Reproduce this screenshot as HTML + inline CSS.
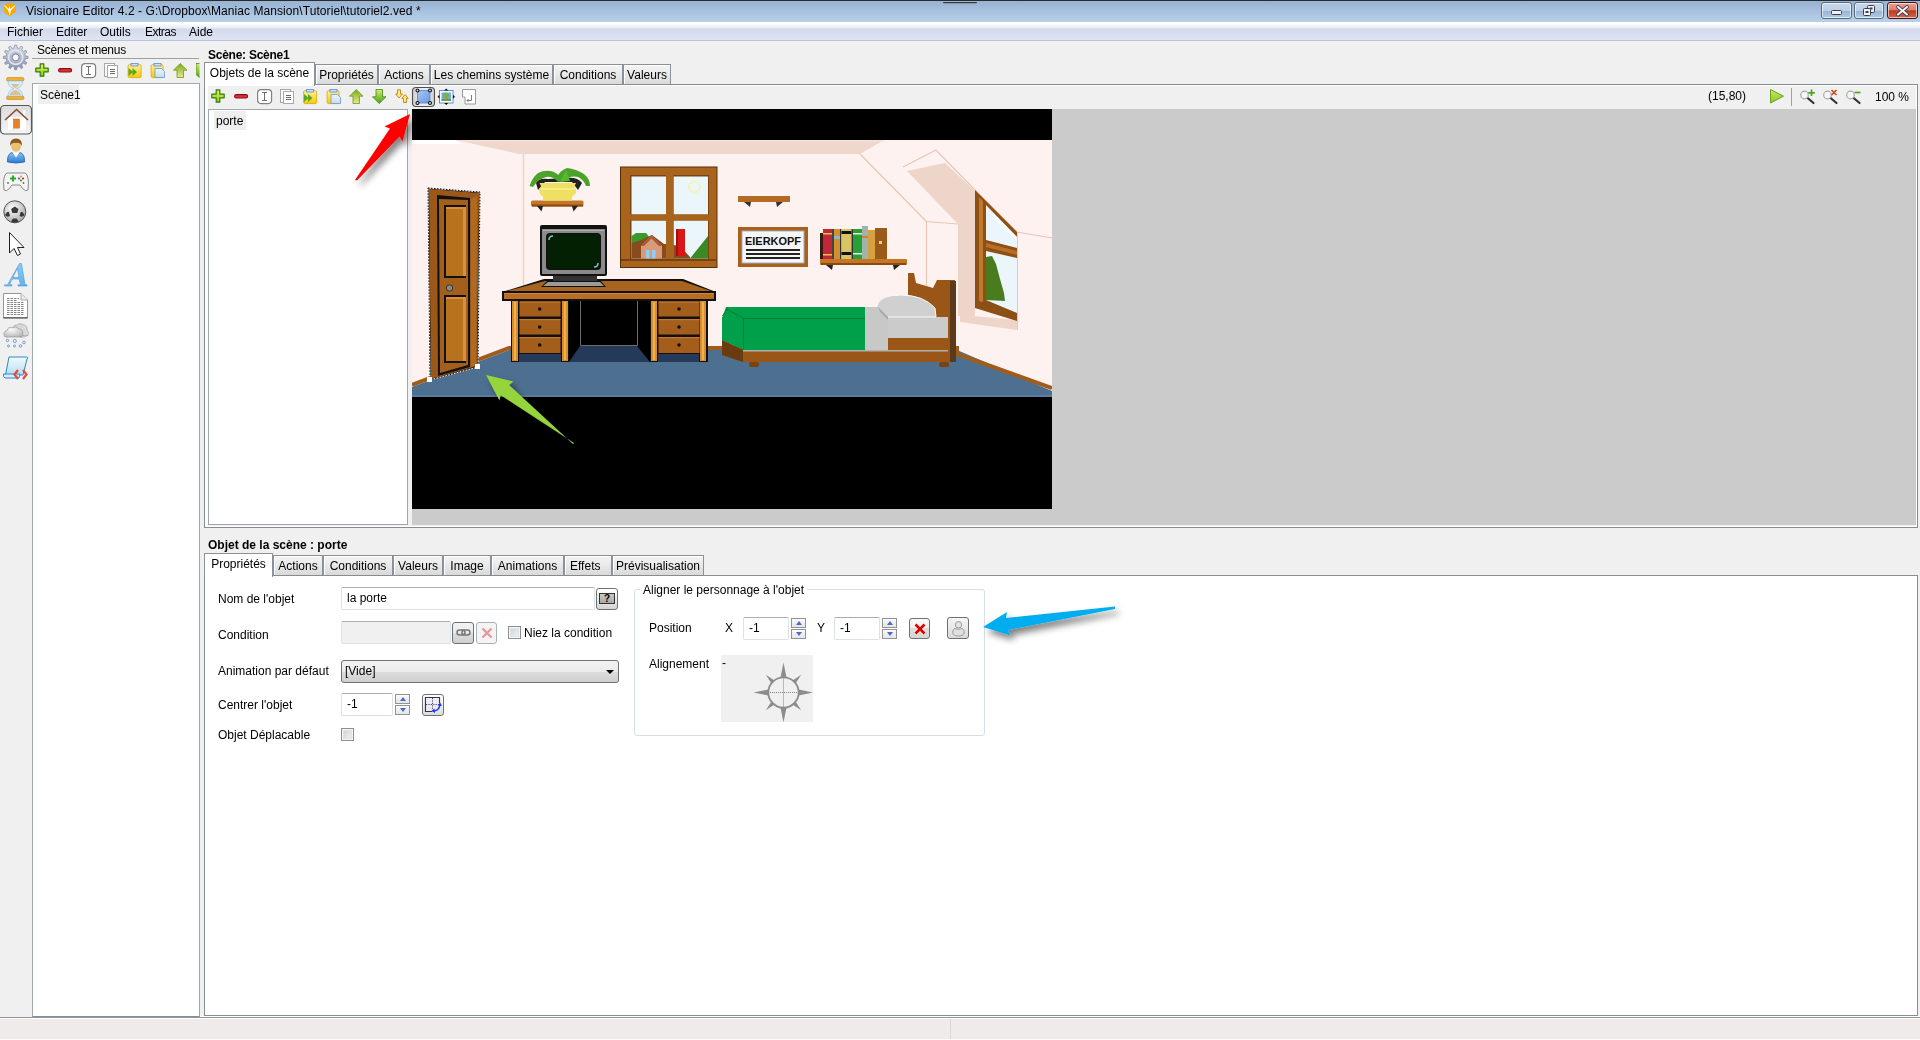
<!DOCTYPE html>
<html><head><meta charset="utf-8">
<style>
*{box-sizing:border-box;margin:0;padding:0}
html,body{width:1920px;height:1040px;overflow:hidden;background:#f0f0f0;font-family:"Liberation Sans",sans-serif;font-size:12px;color:#000}
.a{position:absolute}
.t{position:absolute;white-space:nowrap;line-height:14px;will-change:transform}
#title{left:0;top:0;width:1920px;height:22px;background:linear-gradient(#98b2d3,#b8d0e9);border-top:1px solid #2a2a2a}
#menu{left:0;top:22px;width:1920px;height:19px;background:linear-gradient(#ffffff 0,#fbfcfe 2px,#e9ecf6 6px,#d3d9ec 7px,#dfe4f4 18px);border-bottom:1px solid #b9c1d6}
.wb{position:absolute;top:2px;height:17px;border:1px solid #5a6a82;border-radius:3px;background:linear-gradient(#c6d8ec 0,#bcd0e6 50%,#98b4d2 52%,#b2cbe5 100%);box-shadow:inset 0 0 0 1px rgba(255,255,255,.6)}
.tab{position:absolute;height:20px;border:1px solid #8c9099;border-bottom:none;background:linear-gradient(#f4f4f4,#e9e9e9 50%,#d9d9d9);text-align:center;line-height:21px;box-shadow:inset 1px 1px 0 #fff;will-change:transform}
.tab.sel{background:#fff;height:24px;z-index:2;box-shadow:none}
.pane{position:absolute;border:1px solid #868b96;background:#fff;box-shadow:inset 0 0 0 1px #fff}
.list{position:absolute;border:1px solid #a2a6ae;background:#fff}
.tf{position:absolute;background:#fff;border:1px solid #dde2e8;border-top-color:#abadb3;border-radius:2px}
.btn{position:absolute;border:1px solid #707070;border-radius:3px;background:linear-gradient(#f2f2f2 0,#ebebeb 50%,#dddddd 51%,#cfcfcf 100%)}
.btn.dis{border-color:#a9b1b9;background:#f4f4f4}
.cb{position:absolute;width:13px;height:13px;border:1px solid #8e8f8f;background:linear-gradient(135deg,#c8ccd2,#f8f8f8);box-shadow:inset 0 0 0 1px #f4f4f4,inset 0 0 0 2px #dfe2e6}
.combo{position:absolute;border:1px solid #707070;border-radius:3px;background:linear-gradient(#f2f2f2 0,#ebebeb 50%,#dddddd 51%,#cfcfcf 100%)}
.spin{position:absolute;width:15px;height:22px}
.sb{position:absolute;left:0;width:15px;height:10px;border:1px solid #929292;background:linear-gradient(#fff 0,#f2f2f2 30%,#e6e6e6 100%)}
</style></head><body>
<div id="title" class="a"></div>
<div class="t" style="left:26px;top:4px;letter-spacing:0.07px">Visionaire Editor 4.2 - G:\Dropbox\Maniac Mansion\Tutoriel\tutoriel2.ved *</div>
<div class="wb" style="left:1821px;width:31px"></div>
<div class="wb" style="left:1854px;width:30px"></div>
<div class="wb" style="left:1887px;width:31px;border-color:#4a1018;background:linear-gradient(#e8a090,#d98070 45%,#c0381c 52%,#d06848 100%)"></div>
<svg class="a" style="left:0;top:0;z-index:6" width="1920" height="22">
<path d="M3.5 5 L9.5 2.8 L16 5 L15.5 12 L9.5 16.5 L4 12z" fill="#f8aa00"/>
<path d="M3.5 5 L6 6.2 L8.6 9 L9.5 6 L10.4 9 L13.5 6.2 L16 5 L11 10.5 L9.6 16 L8.4 10.5z" fill="#fff"/>
<rect x="943" y="2" width="34" height="1.2" rx="0.6" fill="#3a3a3a"/>
<rect x="1831.5" y="10.5" width="10" height="4" rx="1" fill="#f0f0f0" stroke="#3a4050" stroke-width="1"/>
<rect x="1867.5" y="5.5" width="7" height="7" rx="1" fill="#f0f0f0" stroke="#3a4050" stroke-width="1"/>
<rect x="1869.5" y="7.5" width="3" height="2" fill="#3a4050"/>
<rect x="1863.5" y="8.5" width="7" height="7" rx="1" fill="#f0f0f0" stroke="#3a4050" stroke-width="1"/>
<rect x="1865.5" y="11" width="3" height="2" fill="#3a4050"/>
<path d="M1898 7 L1907 14.5 M1907 7 L1898 14.5" stroke="#3a4050" stroke-width="3.6" stroke-linecap="round"/>
<path d="M1898 7 L1907 14.5 M1907 7 L1898 14.5" stroke="#f4f4f4" stroke-width="2" stroke-linecap="round"/>
</svg>
<div id="menu" class="a"></div>
<div class="t" style="left:7px;top:25px">Fichier</div>
<div class="t" style="left:56px;top:25px">Editer</div>
<div class="t" style="left:100px;top:25px">Outils</div>
<div class="t" style="left:145px;top:25px;letter-spacing:-0.5px">Extras</div>
<div class="t" style="left:189px;top:25px">Aide</div>

<!-- left panel -->
<svg class="a" style="left:0;top:41px" width="32" height="345" viewBox="0 41 32 345">
<defs>
<linearGradient id="gGear" x1="0" y1="0" x2="0" y2="1"><stop offset="0" stop-color="#dfe2ec"/><stop offset="1" stop-color="#8890ae"/></linearGradient>
<linearGradient id="gHome" x1="0" y1="0" x2="0" y2="1"><stop offset="0" stop-color="#dcdcdc"/><stop offset="1" stop-color="#f6f6f6"/></linearGradient>
<linearGradient id="gBody" x1="0" y1="0" x2="0" y2="1"><stop offset="0" stop-color="#8cc4f0"/><stop offset="1" stop-color="#2a7ad0"/></linearGradient>
<linearGradient id="gA" x1="0" y1="0" x2="1" y2="1"><stop offset="0" stop-color="#a8d8fa"/><stop offset="1" stop-color="#5aaeea"/></linearGradient>
<linearGradient id="gScroll" x1="0" y1="0" x2="0" y2="1"><stop offset="0" stop-color="#f4faff"/><stop offset="1" stop-color="#b6dcf2"/></linearGradient>
<radialGradient id="gCloud" cx="0.4" cy="0.3" r="0.8"><stop offset="0" stop-color="#fafafa"/><stop offset="1" stop-color="#b4b4b4"/></radialGradient>
<radialGradient id="gBall" cx="0.4" cy="0.35" r="0.7"><stop offset="0" stop-color="#fff"/><stop offset="1" stop-color="#a8a8a8"/></radialGradient>
</defs>
<!-- gear -->
<polygon points="14.30,47.90 14.66,45.04 16.74,45.04 17.10,47.90 19.23,48.47 20.98,46.18 22.78,47.22 21.66,49.88 23.22,51.44 25.88,50.32 26.92,52.12 24.63,53.87 25.20,56.00 28.06,56.36 28.06,58.44 25.20,58.80 24.63,60.93 26.92,62.68 25.88,64.48 23.22,63.36 21.66,64.92 22.78,67.58 20.98,68.62 19.23,66.33 17.10,66.90 16.74,69.76 14.66,69.76 14.30,66.90 12.17,66.33 10.42,68.62 8.62,67.58 9.74,64.92 8.18,63.36 5.52,64.48 4.48,62.68 6.77,60.93 6.20,58.80 3.34,58.44 3.34,56.36 6.20,56.00 6.77,53.87 4.48,52.12 5.52,50.32 8.18,51.44 9.74,49.88 8.62,47.22 10.42,46.18 12.17,48.47" fill="url(#gGear)" stroke="#8088a6" stroke-width="0.7" stroke-linejoin="round"/>
<circle cx="15.7" cy="57.4" r="7" fill="none" stroke="#e2e5ee" stroke-width="1.6"/>
<circle cx="15.7" cy="57.4" r="5.2" fill="#b4b9cc"/>
<circle cx="15.7" cy="57.4" r="3.4" fill="#fafafa" stroke="#6a7090" stroke-width="0.8"/>
<!-- hourglass -->
<rect x="6.5" y="77.5" width="17.5" height="3.5" rx="1.5" fill="#f0b030" stroke="#c88010" stroke-width="0.6"/>
<rect x="6.5" y="96" width="17.5" height="3.5" rx="1.5" fill="#f0b030" stroke="#c88010" stroke-width="0.6"/>
<path d="M8 81 Q8 87 14 88.5 Q8 90 8 96 H22.5 Q22.5 90 16.5 88.5 Q22.5 87 22.5 81z" fill="#d8eefc" stroke="#8cc0e8" stroke-width="0.7"/>
<path d="M11 84 h8.5 q-2 3 -4.2 4 q-2.2 -1 -4.3 -4z M9.5 95 q1 -4 5.8 -5 q4.8 1 5.7 5z" fill="#e0c090"/>
<!-- home pressed button -->
<rect x="0.5" y="105.5" width="31" height="28.5" rx="4" fill="url(#gHome)" stroke="#585858" stroke-width="1.2"/>
<rect x="8" y="117" width="18" height="13" fill="#fff"/>
<rect x="23" y="110" width="2.5" height="8" fill="#fff" stroke="#ddd" stroke-width="0.4"/>
<path d="M5 120 L16.6 109.5 L28 120" fill="none" stroke="#8a4a30" stroke-width="1.6"/>
<rect x="13.5" y="119" width="6" height="9.5" fill="#e8802a" stroke="#c86010" stroke-width="0.5"/>
<rect x="12" y="128.5" width="8" height="2" fill="#f0f0f0"/>
<!-- person -->
<path d="M7.5 162 Q7 154 12 152.5 L16 156 L20 152.5 Q25 154 24.5 162 Q16 164 7.5 162z" fill="url(#gBody)" stroke="#1a62b8" stroke-width="0.8"/>
<path d="M12.5 152.5 L16 157.5 L19.5 152.5z" fill="#fff"/>
<ellipse cx="16" cy="146" rx="5" ry="5.8" fill="#e8c070"/>
<path d="M10.2 146 Q9.5 138.5 16 138.5 Q22.5 138.5 21.8 146 Q20 142 16 143 Q12 142 10.2 146z" fill="#8a5a20"/>
<!-- gamepad -->
<path d="M7 173 H25 Q28 174 28.5 183 L28 190 Q26 192 23 189 L20 185 H12 L9 189 Q6 192 4 190 L3.5 183 Q4 174 7 173z" fill="#f4f4f4" stroke="#808080" stroke-width="0.9"/>
<path d="M10 177.5 h2 v-2 h2 v2 h2 v2 h-2 v2 h-2 v-2 h-2z" fill="#2ca82c"/>
<circle cx="19" cy="178.5" r="1.1" fill="#2a6ad8"/><circle cx="21" cy="176.5" r="1.1" fill="#f0a020"/><circle cx="23" cy="178.5" r="1.1" fill="#e02020"/><circle cx="21" cy="180.5" r="1.1" fill="#20a020"/>
<circle cx="8" cy="183" r="0.9" fill="#666"/><circle cx="23.5" cy="183" r="0.9" fill="#666"/>
<!-- ball -->
<circle cx="14.8" cy="211.8" r="11" fill="url(#gBall)" stroke="#303030" stroke-width="0.8"/>
<polygon points="14.8,206.5 18.5,209 17.3,213 12.3,213 11.1,209" fill="#3a3a3a"/>
<path d="M5 215 q2 -4 4 -3 l1 4 q-3 2 -5 -1z M24.6 215 q-2 -4 -4 -3 l-1 4 q3 2 5 -1z M11 221.5 l2 -3 h3.6 l2 3 q-4 1.8 -7.6 0z" fill="#3a3a3a"/>
<!-- cursor -->
<path d="M9.5 232.5 V253 L14 248.5 L17.5 255.5 L20.5 254 L17.5 247.5 H24z" fill="#fff" stroke="#222" stroke-width="1" stroke-linejoin="round"/>
<!-- A -->
<path d="M4.5 286 H12 V284.8 H9.5 L12 279 H19 L20.5 284.8 H18 V286 H27 V284.8 H25 L21.5 263.5 H19.5 L7.5 284.8 H4.5z M12.8 277.5 L17.5 268 L18.8 277.5z" fill="url(#gA)" stroke="#4a98d8" stroke-width="0.6" fill-rule="evenodd"/>
<!-- document -->
<path d="M3.5 293.5 H21 L27.5 300 V318 H3.5z" fill="#fff" stroke="#8a8a8a" stroke-width="0.9"/>
<path d="M21 293.5 V300 H27.5" fill="#ececec" stroke="#9a9a9a" stroke-width="0.8"/>
<rect x="3.5" y="317" width="24" height="1.5" fill="#6a6a6a"/>
<g stroke="#6a6a6a" stroke-width="0.8" stroke-dasharray="2.5,1">
<path d="M7 298.5 H19 M7 300.5 H17 M7 302.5 H24 M7 304.5 H24 M7 306.5 H24 M7 308.5 H24 M7 310.5 H24 M7 312.5 H24 M7 314.5 H24"/>
</g>
<!-- cloud -->
<path d="M13 330 Q12 325 17 325 Q19 322.5 23 324.5 Q27.5 325 27 330 Q29.5 332 28 335.5 H14z" fill="#d8d8d8" stroke="#a8a8a8" stroke-width="0.7"/>
<path d="M4.5 336.5 Q2.5 331.5 7 330.5 Q8 326.5 12.5 327.5 Q16 325.5 19 329 Q23 329 22.5 333 Q24 335.5 21.5 337 H6z" fill="url(#gCloud)" stroke="#9a9a9a" stroke-width="0.7"/>
<path d="M20 337 Q25 337.5 27.5 335.5" fill="none" stroke="#9a9a9a" stroke-width="0.7"/>
<g fill="none" stroke="#5a8ad8" stroke-width="0.8">
<circle cx="7.5" cy="340.5" r="1.2"/><circle cx="14.8" cy="341" r="1.6"/><circle cx="24" cy="342.5" r="1.3"/>
<circle cx="8.5" cy="346" r="1"/><circle cx="14.5" cy="346" r="1"/><circle cx="20.5" cy="346" r="1.3"/>
</g>
<!-- scroll -->
<path d="M9 357 H27 Q28.5 357.5 27 359 L23 375 H5.5z" fill="url(#gScroll)" stroke="#2a88c8" stroke-width="1"/>
<path d="M3.5 374 H20 L19 378 H5 Q3 377 3.5 374z" fill="#d8eefa" stroke="#2a88c8" stroke-width="1"/>
<path d="M18 370 L14.5 374.5 L18 379 M23 370 L26.5 374.5 L23 379" fill="none" stroke="#e84a3a" stroke-width="2.2"/>
</svg>

<div class="t" style="left:37px;top:43px;letter-spacing:-0.25px">Scènes et menus</div>
<div class="a" style="left:32px;top:58px;width:167px;height:1px;background:#a0a0a0"></div>
<div class="list" style="left:32px;top:83px;width:168px;height:934px;border-bottom-color:#8a8e96"></div>
<div class="a" style="left:38px;top:85px;width:41px;height:19px;background:#efefef"></div>
<div class="t" style="left:40px;top:88px">Scène1</div>

<!-- top right pane -->
<div class="t" style="left:208px;top:48px;font-weight:bold;letter-spacing:-0.25px">Scène: Scène1</div>
<div class="pane" style="left:204px;top:84px;width:1714px;height:444px;background:#f0f0f0"></div>
<div class="tab sel" style="left:204px;top:62px;width:111px">Objets de la scène</div>
<div class="tab" style="left:315px;top:64px;width:63px">Propriétés</div>
<div class="tab" style="left:378px;top:64px;width:52px">Actions</div>
<div class="tab" style="left:430px;top:64px;width:123px">Les chemins système</div>
<div class="tab" style="left:553px;top:64px;width:70px">Conditions</div>
<div class="tab" style="left:623px;top:64px;width:48px">Valeurs</div>
<div class="a" style="left:205px;top:86px;width:3px;height:441px;background:#fff"></div>
<div class="list" style="left:208px;top:109px;width:200px;height:416px"></div>
<div class="a" style="left:214px;top:111px;width:32px;height:19px;background:#efefef"></div>
<div class="t" style="left:216px;top:114px">porte</div>
<div class="a" style="left:412px;top:109px;width:1504px;height:416px;background:#cbcbcb"></div>
<svg class="a" style="left:412px;top:109px" width="640" height="400" viewBox="412 109 640 400">
<rect x="412" y="109" width="640" height="400" fill="#000"/>
<!-- walls -->
<rect x="412" y="140" width="640" height="257" fill="#fdf2ef"/>
<polygon points="456,140 884,140 860,154 519,154" fill="#efd7cc"/><rect x="456" y="140" width="428" height="1.5" fill="#f6e2d8"/>
<polygon points="412,140 456,140 462,144 412,144" fill="#ffffff"/>
<line x1="523.5" y1="154" x2="523.5" y2="345" stroke="#eed2c6" stroke-width="1.5"/>
<line x1="860" y1="154" x2="926" y2="221" stroke="#e8c6b6" stroke-width="1.2"/>
<line x1="926.5" y1="221" x2="926.5" y2="345" stroke="#e8c6b6" stroke-width="1.2"/>
<line x1="926" y1="221.5" x2="958" y2="224" stroke="#e8c6b6" stroke-width="1.2"/>
<!-- dormer -->

<polyline points="903,167 936,150 975,190" fill="none" stroke="#e8c6b6" stroke-width="1.2"/>
<polygon points="907,171 945,163 975,191 975,316 958,316 958,224" fill="#edd5ca"/>
<polyline points="975,190 1017,232 1052,238" fill="none" stroke="#e8c6b6" stroke-width="1.2"/>
<line x1="1017.5" y1="232" x2="1017.5" y2="330" stroke="#e8c6b6" stroke-width="1"/>
<polygon points="960,315 1017,320 1017,330 960,322" fill="#eed5ca"/>
<!-- dormer window -->
<polygon points="975,190 1017,232 1017,321 975,308" fill="#8c4f14"/>
<polygon points="979,197 983,201 983,302 979,301" fill="#c07830"/>
<polygon points="986,205 1017,237 1017,248 986,240" fill="#eaf6fb"/>
<polygon points="994,214 1017,237 1017,241 992,216" fill="#ffffff" opacity="0.7"/>
<polygon points="986,251 1017,258 1017,313 986,300" fill="#eaf6fb"/>
<polygon points="986,257 992,256 996,264 1000,279 1004,293 1005,301 986,300" fill="#4a7c1e"/>
<polygon points="986,243 1017,251 1017,255 986,247" fill="#b86e26"/>
<!-- floor -->
<polygon points="412,387 509,350 957,350 1052,391 1052,397 412,397" fill="#4e7090"/>
<polyline points="412,385 509,348 957,348 957,354 1052,388" fill="none" stroke="#a05c1c" stroke-width="4"/>
<rect x="412" y="395" width="640" height="2" fill="#5a7ea0"/>
<!-- door -->
<polygon points="428,188 480,192 478,367 430,380" fill="#111"/>
<polygon points="429,189 479,193 477,366 431,379" fill="#9c5818"/>
<polygon points="437,195 470,198 470,367 438,376" fill="#111"/>
<polygon points="439,199 468,200 468,365 440,373" fill="#a4601a"/>
<polygon points="471,199 477,196 476,365 471,367" fill="#b06a20"/>
<rect x="444" y="205" width="22" height="73" fill="#111"/>
<rect x="446" y="207" width="20" height="69" fill="#b8721e"/>
<rect x="463" y="207" width="3" height="69" fill="#d89040"/>
<rect x="446" y="207" width="20" height="2" fill="#d89040"/>
<rect x="444" y="295" width="22" height="68" fill="#111"/>
<rect x="446" y="297" width="20" height="64" fill="#b8721e"/>
<rect x="463" y="297" width="3" height="64" fill="#d89040"/>
<rect x="446" y="297" width="20" height="2" fill="#d89040"/>
<circle cx="449.5" cy="288" r="3.2" fill="#8a8a8a" stroke="#333" stroke-width="1"/>
<polygon points="428,188 480,192 478,367 430,380" fill="none" stroke="#fff" stroke-width="1"/>
<polygon points="428,188 480,192 478,367 430,380" fill="none" stroke="#000" stroke-width="1" stroke-dasharray="1.5,1.5"/>
<rect x="427" y="377" width="5" height="5" fill="#fff"/>
<rect x="475" y="364" width="5" height="5" fill="#fff"/>
<!-- plant & shelf -->
<rect x="531" y="200.5" width="52.5" height="6" rx="1.5" fill="#c47624"/>
<rect x="532" y="204.5" width="51" height="2" fill="#8a4a10"/>
<path d="M537 206 l4.5 5.5 l1.5 -5.5z M578 206 l-4.5 5.5 l-1.5 -5.5z" fill="#222"/>
<path d="M536 183 Q538 178 548 179 L566 178 Q578 177 582 183 L578 190 L572 182 L545 182 L538 190z" fill="#222"/>
<path d="M539.5 183 H576 L574 187 Q577 189 576 193 L572 197 V200.5 H543 V197 Q538 193 539.5 189 L541.5 187z" fill="#efe064"/>
<path d="M541 189 H575" stroke="#f8f090" stroke-width="1.5"/>
<path d="M529.5 186 Q532 178 538 173 Q546 169 554 172 Q560 175 562 181 L558 182 Q553 176 546 177 Q538 179 533 187z" fill="#4aa42a"/>
<path d="M556 179 Q560 170 567 168 Q576 169 584 174 Q590 179 590 186 L586 186 Q584 180 578 177 Q570 175 564 181z" fill="#4aa42a"/>
<path d="M560 182 L566 170 L570 181z" fill="#5ab830"/>
<!-- window -->
<rect x="620" y="166.5" width="97.5" height="101.5" fill="#5a2e08"/>
<rect x="621" y="167.5" width="95.5" height="99.5" fill="#a8641c"/>
<rect x="630" y="175" width="79" height="85" fill="#7a4210"/>
<rect x="631.5" y="176.5" width="34.5" height="38" fill="#ebf6fa"/>
<rect x="673.5" y="176.5" width="34.5" height="38" fill="#ebf6fa"/>
<rect x="631.5" y="220.5" width="34.5" height="38" fill="#ebf6fa"/>
<rect x="673.5" y="220.5" width="34.5" height="38" fill="#ebf6fa"/>
<rect x="666" y="175" width="7.5" height="85" fill="#a8641c"/>
<rect x="630" y="214.5" width="79" height="6" fill="#a8641c"/>
<rect x="621" y="259" width="95.5" height="2" fill="#7a4210"/>
<circle cx="694.5" cy="187" r="5.5" fill="none" stroke="#f6f0a0" stroke-width="2" stroke-dasharray="1.5,1"/>
<polygon points="631.5,236 636,233 646,233 650,238 646,243 631.5,243" fill="#3a9a2a"/>
<polygon points="631.5,243 641,240 652,235 664,244 666,244 666,258.5 631.5,258.5" fill="#8a4a20"/>
<polygon points="641,246 651.5,235 662,246 662,258.5 641,258.5" fill="#d89a78"/>
<polygon points="641,246 651.5,235 662,246 659,246 651.5,238.5 644,246" fill="#a85a38"/>
<rect x="646" y="250" width="3.5" height="8.5" fill="#8cd0f8"/>
<rect x="652" y="250" width="3.5" height="8.5" fill="#8cd0f8"/>
<polygon points="673.5,245 680,246 690,257 690,258.5 673.5,258.5" fill="#8a4a20"/>
<rect x="676" y="229" width="9" height="27" fill="#d81818"/>
<rect x="676" y="229" width="2" height="27" fill="#a01010"/>
<polygon points="690,258.5 708,236 708,258.5" fill="#3a8a24"/>
<!-- empty shelf -->
<rect x="738" y="196" width="52" height="6" fill="#b36a22"/>
<path d="M744 202 l6 5 l1 -5z M783 202 l-6 5 l-1 -5z" fill="#333"/>
<!-- sign -->
<rect x="738" y="227" width="70" height="40" fill="#a8601c"/>
<rect x="742" y="231" width="62" height="32" fill="#f6f6f6" stroke="#9fb0c0" stroke-width="1"/>
<text x="773" y="245" font-family="Liberation Sans" font-weight="bold" font-size="11" text-anchor="middle" fill="#111" textLength="56" lengthAdjust="spacingAndGlyphs">EIERKOPF</text>
<rect x="746" y="249" width="54" height="2" fill="#222"/>
<rect x="746" y="253" width="54" height="2" fill="#222"/>
<rect x="746" y="257" width="54" height="2" fill="#222"/>
<!-- books -->
<rect x="820" y="259" width="87" height="6" rx="1" fill="#c47624"/>
<rect x="821" y="263" width="85" height="2" fill="#8a4a10"/>
<path d="M826 265 l6 5 l1 -5z M900 265 l-6 5 l-1 -5z" fill="#222"/>
<rect x="820" y="233" width="3" height="26" fill="#3a1a10"/>
<rect x="823" y="229" width="9" height="30" fill="#c02838"/>
<rect x="823" y="233" width="9" height="1.5" fill="#f0c040"/><rect x="823" y="254" width="9" height="1.5" fill="#f0c040"/>
<rect x="832" y="229" width="2" height="30" fill="#444"/>
<rect x="834" y="229" width="6" height="30" fill="#d09030"/>
<rect x="834" y="236" width="6" height="3" fill="#88b8d0"/>
<rect x="840" y="229" width="1.5" height="30" fill="#333"/>
<rect x="841.5" y="229" width="10" height="30" fill="#d8c464"/>
<rect x="841.5" y="231" width="10" height="3" fill="#111"/><rect x="841.5" y="252" width="10" height="3" fill="#111"/>
<rect x="851.5" y="229" width="1.5" height="30" fill="#333"/>
<rect x="853" y="229" width="9" height="30" fill="#28a038"/>
<rect x="853" y="233" width="9" height="1.5" fill="#e0f0e0"/><rect x="853" y="253" width="9" height="1.5" fill="#e0f0e0"/>
<rect x="862" y="226" width="6" height="33" fill="#a0b4ac"/>
<rect x="862" y="236" width="6" height="2" fill="#d08040"/>
<rect x="868" y="230" width="7" height="29" fill="#d8a040"/>
<rect x="875" y="228" width="12" height="31" fill="#9a5a1c"/>
<rect x="879" y="241" width="3" height="3" fill="#f0d080"/>
<!-- desk -->
<polygon points="502,292 544,279 683,279 716,292" fill="#111"/>
<polygon points="507,291 545,281 682,281 711,291" fill="#a8641e"/>
<rect x="502" y="291" width="214" height="10" fill="#111"/>
<rect x="504" y="293" width="210" height="6" fill="#b86e22"/>
<rect x="504" y="293" width="210" height="1" fill="#d08838"/>
<rect x="511" y="300" width="197" height="62" fill="#111"/>
<rect x="569" y="301" width="81" height="61" fill="#000"/>
<g fill="#d88e2c"><rect x="512" y="301" width="6" height="60"/><rect x="562" y="301" width="6" height="60"/><rect x="651" y="301" width="6" height="60"/><rect x="700" y="301" width="6" height="60"/></g>
<g fill="#f0b050"><rect x="514" y="302" width="2" height="58"/><rect x="564" y="302" width="2" height="58"/><rect x="653" y="302" width="2" height="58"/><rect x="702" y="302" width="2" height="58"/></g>
<g fill="#a45e1c"><rect x="519.5" y="301.5" width="41" height="15"/><rect x="519.5" y="319" width="41" height="15.5"/><rect x="519.5" y="337" width="41" height="16"/><rect x="658.5" y="301.5" width="41" height="15"/><rect x="658.5" y="319" width="41" height="15.5"/><rect x="658.5" y="337" width="41" height="16"/></g>
<g fill="#c47a2c"><rect x="519.5" y="301.5" width="41" height="1.2"/><rect x="519.5" y="319" width="41" height="1.2"/><rect x="519.5" y="337" width="41" height="1.2"/><rect x="658.5" y="301.5" width="41" height="1.2"/><rect x="658.5" y="319" width="41" height="1.2"/><rect x="658.5" y="337" width="41" height="1.2"/></g>
<g fill="#111"><circle cx="539.7" cy="309" r="1.8"/><circle cx="539.7" cy="327" r="1.8"/><circle cx="539.7" cy="345" r="1.8"/><circle cx="679" cy="309" r="1.8"/><circle cx="679" cy="327" r="1.8"/><circle cx="679" cy="345" r="1.8"/></g>
<rect x="519" y="354" width="42" height="8" fill="#243a58"/>
<rect x="658" y="354" width="41" height="8" fill="#243a58"/>
<polygon points="580,346 637,346 650,362 569,362" fill="#243a58"/>
<polyline points="580.5,301 580.5,345.5 637.5,345.5 637.5,301" fill="none" stroke="#6a6a6a" stroke-width="1"/>
<!-- TV -->
<rect x="540" y="225" width="67" height="51" rx="2" fill="#111"/>
<rect x="542" y="229" width="63" height="45" fill="#8a8a8a"/>
<rect x="543" y="230" width="61" height="1" fill="#b0b0b0"/>
<rect x="546" y="233" width="55" height="37" rx="4" fill="#111"/>
<rect x="547" y="234" width="53" height="35" rx="4" fill="#032003"/>
<path d="M549 240 q0 -4 4 -4" fill="none" stroke="#8ab8d8" stroke-width="1.5"/>
<path d="M598 263 q0 4 -4 4" fill="none" stroke="#8ab8d8" stroke-width="1.5"/>
<rect x="553" y="276" width="44" height="6" fill="#333"/>
<polygon points="547,281 601,281 606,287 541,287" fill="#111"/>
<polygon points="548,282 600,282 604,286 543,286" fill="#9a9a9a"/>
<!-- bed -->
<polygon points="908,273 914,273 916,283 933,288 937,280 955,280 956,362 908,362" fill="#9a5616"/>
<rect x="950" y="281" width="6" height="81" fill="#5a3a1a"/>
<polygon points="888,317 948,317 948,338 888,338" fill="#cbcbcb"/>
<path d="M877 306 q2 -11 24 -11 q22 0 34 13 l1 9 h-59z" fill="#d0d0d0" stroke="#fafafa" stroke-width="1"/>
<polygon points="865,307 878,307 888,317 888,350 865,350" fill="#c8c8c8"/>
<polygon points="878,307 888,317 888,320 880,312" fill="#aaa"/>
<rect x="888" y="338" width="60" height="12" fill="#9a5616"/>
<polygon points="726,307 865,307 865,350 743,350 722,340 722,318" fill="#00a04a"/>
<polyline points="722.5,316 728,308" fill="none" stroke="#0a7a3a" stroke-width="1"/>
<line x1="743.5" y1="318" x2="743.5" y2="350" stroke="#0a7a3a" stroke-width="1"/>
<line x1="726" y1="309" x2="743" y2="318" stroke="#0a7a3a" stroke-width="1"/>
<line x1="743" y1="318.5" x2="865" y2="318.5" stroke="#0a7a3a" stroke-width="1"/>
<polygon points="722,340 743,350 948,350 948,362 743,362 722,355" fill="#9a5616"/>
<polygon points="722,340 743,350 743,362 722,355" fill="#6a3a10"/>
<rect x="743" y="350" width="205" height="1.5" fill="#b0b0b0"/>
<rect x="749" y="362" width="10" height="5" rx="2" fill="#7a4210"/>
<rect x="939" y="362" width="10" height="5" rx="2" fill="#7a4210"/>
</svg>

<div class="t" style="left:1708px;top:89px">(15,80)</div>
<div class="t" style="left:1875px;top:90px">100 %</div>

<svg class="a" style="left:0;top:0;z-index:5" width="1920" height="120">
<defs>
<linearGradient id="gPlus" x1="0" y1="0" x2="0" y2="1"><stop offset="0" stop-color="#e8f24a"/><stop offset="1" stop-color="#8cc828"/></linearGradient>
<linearGradient id="gFold" x1="0" y1="0" x2="0" y2="1"><stop offset="0" stop-color="#fff2a0"/><stop offset="1" stop-color="#f8c800"/></linearGradient>
<linearGradient id="gUp" x1="0" y1="0" x2="0" y2="1"><stop offset="0" stop-color="#7aa818"/><stop offset="1" stop-color="#e8ea90"/></linearGradient>
<linearGradient id="gDown" x1="0" y1="0" x2="0" y2="1"><stop offset="0" stop-color="#d8ec78"/><stop offset="1" stop-color="#48a010"/></linearGradient>
<linearGradient id="gPaper" x1="0" y1="0" x2="0" y2="1"><stop offset="0" stop-color="#eaf4fc"/><stop offset="1" stop-color="#c8dcf0"/></linearGradient>
<linearGradient id="gPressed" x1="0" y1="0" x2="1" y2="0"><stop offset="0" stop-color="#c8c8c8"/><stop offset="0.25" stop-color="#ececec"/><stop offset="0.75" stop-color="#ececec"/><stop offset="1" stop-color="#c8c8c8"/></linearGradient>
<linearGradient id="gBlueSq" x1="0" y1="0" x2="1" y2="1"><stop offset="0" stop-color="#a8c8f0"/><stop offset="1" stop-color="#6a98e0"/></linearGradient>
<linearGradient id="gPlay" x1="0" y1="0" x2="0" y2="1"><stop offset="0" stop-color="#c8e860"/><stop offset="1" stop-color="#8cc828"/></linearGradient>
<g id="iPlus"><path d="M5.2 0.8 H8.8 V5.2 H13.2 V8.8 H8.8 V13.2 H5.2 V8.8 H0.8 V5.2 H5.2z" fill="url(#gPlus)" stroke="#2e7a0e" stroke-width="1.2" stroke-linejoin="round"/></g>
<g id="iMinus"><rect x="0.6" y="0.6" width="13" height="3.4" rx="1.7" fill="#e0303a" stroke="#8a1010" stroke-width="1.1"/></g>
<g id="iIbeam"><rect x="0.6" y="0.6" width="14" height="14" rx="3.5" fill="#fff" stroke="#808080" stroke-width="1.2"/><path d="M5 3.5 H10 M7.5 3.5 V11.5 M5 11.5 H10" stroke="#707070" stroke-width="1"/></g>
<g id="iCopy"><rect x="0.5" y="0.5" width="10" height="13" fill="#fff" stroke="#a8a8a8"/><rect x="3.5" y="2.5" width="10" height="12" fill="#fff" stroke="#a8a8a8"/><rect x="6" y="6" width="5" height="1" fill="#6a6a6a"/><rect x="6" y="8" width="5" height="1" fill="#6a6a6a"/><rect x="6" y="10" width="5" height="1" fill="#6a6a6a"/></g>
<g id="iPasteArr"><rect x="0.6" y="1.6" width="13" height="13" rx="1.5" fill="url(#gFold)" stroke="#d8a800" stroke-width="0.8"/><rect x="3.5" y="0.5" width="7" height="2.5" fill="#cfe0f6" stroke="#5a90d8" stroke-width="0.8"/><path d="M1 5 L5.5 9 L1 13z M5 5 L9.5 9 L5 13z" fill="#5aa820"/></g>
<g id="iPaste"><rect x="0.6" y="1.6" width="12" height="13" rx="1.5" fill="url(#gFold)" stroke="#d8a800" stroke-width="0.8"/><rect x="3.5" y="0.5" width="7" height="2.5" fill="#cfe0f6" stroke="#5a90d8" stroke-width="0.8"/><path d="M4.5 5.5 H11 L14 8.5 V14.5 H4.5z" fill="url(#gPaper)" stroke="#6a98d8" stroke-width="0.8"/></g>
<g id="iUp"><path d="M7.2 0.5 L14 7.2 H10.5 V14.5 H4 V7.2 H0.5z" fill="url(#gUp)" stroke="#6a9a10" stroke-width="0.8" stroke-linejoin="round"/></g>
<g id="iDown"><path d="M7.2 14.5 L14 7.8 H10.5 V0.5 H4 V7.8 H0.5z" fill="url(#gDown)" stroke="#3a8a10" stroke-width="0.8" stroke-linejoin="round"/></g>
<g id="iSwap"><path d="M2.5 0.8 H5.5 V5 H7.5 L4 9 L0.5 5 H2.5z M8.5 13.5 H11.5 V9.5 H13.2 L10 5.5 L6.8 9.5 H8.5z" fill="#ffe890" stroke="#c89010" stroke-width="1" stroke-linejoin="round"/></g>
</defs>
<!-- left panel toolbar -->
<use href="#iPlus" x="35" y="63"/>
<use href="#iMinus" x="58" y="68"/>
<use href="#iIbeam" x="81" y="63"/>
<use href="#iCopy" x="104" y="63"/>
<use href="#iPasteArr" x="127.5" y="63"/>
<use href="#iPaste" x="150.5" y="63"/>
<use href="#iUp" x="173" y="63"/>
<svg x="196" y="60" width="3.5" height="20"><use href="#iDown" x="-4" y="3"/></svg>
<!-- scene toolbar -->
<use href="#iPlus" x="211" y="89"/>
<use href="#iMinus" x="234" y="94"/>
<use href="#iIbeam" x="257" y="89"/>
<use href="#iCopy" x="280" y="89"/>
<use href="#iPasteArr" x="303" y="89"/>
<use href="#iPaste" x="326.5" y="89"/>
<use href="#iUp" x="349" y="89"/>
<use href="#iDown" x="372" y="89"/>
<use href="#iSwap" x="395" y="89"/>
<rect x="412.5" y="87.5" width="22" height="19" rx="3.5" fill="url(#gPressed)" stroke="#505050" stroke-width="1.1"/>
<rect x="417.5" y="90.5" width="12.5" height="12.5" fill="url(#gBlueSq)" stroke="#4a80e0" stroke-width="0.8"/>
<g fill="#ddd" stroke="#111" stroke-width="1.1"><circle cx="417.5" cy="90.5" r="1.5"/><circle cx="430" cy="90.5" r="1.5"/><circle cx="417.5" cy="103" r="1.5"/><circle cx="430" cy="103" r="1.5"/></g>
<rect x="439.5" y="90.5" width="13.5" height="12.5" fill="#fff" stroke="#5a90e0" stroke-width="1"/>
<rect x="441.5" y="92.5" width="9.5" height="8.5" fill="#7aa8d8"/>
<rect x="441.5" y="99" width="9.5" height="2" fill="#5aa838"/>
<circle cx="446.2" cy="95.5" r="2.8" fill="#6ab850"/>
<rect x="445.5" y="98" width="1.5" height="3" fill="#c88030"/>
<path d="M446.2 88.5 l-2 2 h4z M446.2 105 l-2 -2 h4z M437.5 96.8 l2 -2 v4z M455 96.8 l-2 -2 v4z" fill="#111"/>
<path d="M462.5 89.5 H475.5 V104 H465 V97 H462.5z" fill="#fff" stroke="#909090" stroke-width="0.9"/>
<path d="M471.5 95 V100.5 H467 M468.5 99 L467 100.5 L468.5 102" fill="none" stroke="#707070" stroke-width="0.9"/>
<!-- right zoom toolbar -->
<path d="M1770.5 89.5 L1783.5 96.2 L1770.5 103z" fill="url(#gPlay)" stroke="#5a9a10" stroke-width="0.9"/>
<rect x="1791" y="88" width="1" height="18" fill="#a0a0a0"/>
<g id="lens"><line x1="1807" y1="97.5" x2="1813.5" y2="103" stroke="#303030" stroke-width="2.2" stroke-linecap="round"/><circle cx="1804.5" cy="95" r="3.8" fill="#f4f6fa" stroke="#a8a8a8" stroke-width="1.2"/></g>
<path d="M1811.5 89.5 V96 M1808.3 92.8 H1814.8" stroke="#4aa818" stroke-width="1.7"/>
<use href="#lens" x="23"/>
<path d="M1831.5 90 L1836.5 95 M1836.5 90 L1831.5 95" stroke="#d84a20" stroke-width="1.7"/>
<use href="#lens" x="46"/>
<path d="M1854.5 92.5 H1860.5" stroke="#4aa818" stroke-width="1.7"/>
</svg>

<!-- bottom pane -->
<div class="t" style="left:208px;top:538px;font-weight:bold">Objet de la scène : porte</div>
<div class="pane" style="left:204px;top:575px;width:1714px;height:441px"></div>
<div class="tab sel" style="left:204px;top:553px;width:69px">Propriétés</div>
<div class="tab" style="left:273px;top:555px;width:50px">Actions</div>
<div class="tab" style="left:323px;top:555px;width:70px">Conditions</div>
<!-- bottom tabs rest -->
<div class="tab" style="left:393px;top:555px;width:50px">Valeurs</div>
<div class="tab" style="left:443px;top:555px;width:48px">Image</div>
<div class="tab" style="left:491px;top:555px;width:73px">Animations</div>
<div class="tab" style="left:564px;top:555px;width:48px;text-align:left;padding-left:5px">Effets</div>
<div class="tab" style="left:612px;top:555px;width:92px">Prévisualisation</div>
<!-- form -->
<div class="t" style="left:218px;top:592px">Nom de l'objet</div>
<div class="tf" style="left:341px;top:587px;width:254px;height:23px"></div>
<div class="t" style="left:347px;top:591px">la porte</div>
<div class="btn" style="left:596px;top:588px;width:22px;height:22px;background:linear-gradient(#fff 0,#f0f0f0 40%,#d4d4d4 100%)"><div class="a" style="left:2px;top:4px;width:16px;height:11px;background:linear-gradient(#c8c8c8,#a8a8a8);border:1px solid #333;color:#000;font-size:10px;font-weight:bold;line-height:9px;text-align:center">?</div></div>
<div class="t" style="left:218px;top:628px">Condition</div>
<div class="tf" style="left:341px;top:621px;width:110px;height:23px;background:#f0f0f0"></div>
<div class="btn" style="left:452px;top:622px;width:22px;height:22px"><svg class="a" style="left:3px;top:5px" width="15" height="10"><rect x="1" y="2" width="8" height="5" rx="2.5" fill="none" stroke="#777" stroke-width="1.5"/><rect x="6" y="2" width="8" height="5" rx="2.5" fill="none" stroke="#777" stroke-width="1.5"/></svg></div>
<div class="btn dis" style="left:476px;top:622px;width:21px;height:22px"><svg class="a" style="left:4px;top:4px" width="12" height="12"><path d="M1.5 1.5 L10.5 10.5 M10.5 1.5 L1.5 10.5" stroke="#e89898" stroke-width="2.4"/></svg></div>
<div class="cb" style="left:508px;top:626px"></div>
<div class="t" style="left:524px;top:626px">Niez la condition</div>
<div class="t" style="left:218px;top:664px">Animation par défaut</div>
<div class="combo" style="left:341px;top:660px;width:278px;height:23px"><div class="t" style="left:3px;top:3px">[Vide]</div><svg class="a" style="left:264px;top:9px" width="9" height="5"><path d="M0 0 H8 L4 4z" fill="#000"/></svg></div>
<div class="t" style="left:218px;top:698px">Centrer l'objet</div>
<div class="tf" style="left:341px;top:693px;width:52px;height:23px"></div>
<div class="t" style="left:347px;top:697px">-1</div>
<div class="spin" style="left:395px;top:694px"><div class="sb" style="top:0"><svg class="a" style="left:4px;top:2px" width="6" height="4"><path d="M0 4 L3 0 L6 4z" fill="#4a6ad0"/></svg></div><div class="sb" style="top:11px"><svg class="a" style="left:4px;top:2px" width="6" height="4"><path d="M0 0 L3 4 L6 0z" fill="#4a6ad0"/></svg></div></div>
<div class="btn" style="left:422px;top:694px;width:22px;height:22px;background:linear-gradient(#fff 0,#f4f4f4 45%,#dcdcdc 100%)"><svg class="a" style="left:1px;top:1px" width="18" height="18" viewBox="424 696 18 18"><path d="M439.5 703 V697.5 H425.5 V711.5 H432" fill="none" stroke="#3a3060" stroke-width="1.2"/><rect x="426" y="698" width="13" height="13" fill="#e8e8f0" opacity="0.6"/><path d="M432.5 698 V711 M426 704.5 H439" stroke="#4a4070" stroke-width="1" stroke-dasharray="1.2,1.2"/><path d="M433 711 Q439 711 440 705" fill="none" stroke="#1a3ae8" stroke-width="1.5"/><path d="M437.5 705.5 L440.2 702.5 L442 706z M434.5 708.5 L431.5 711 L435 713z" fill="#1a3ae8"/></svg></div>
<div class="t" style="left:218px;top:728px">Objet Déplacable</div>
<div class="cb" style="left:341px;top:728px"></div>
<!-- group box -->
<div class="a" style="left:634px;top:589px;width:351px;height:147px;border:1px solid #d5dfe5;border-radius:3px"></div>
<div class="t" style="left:640px;top:583px;background:#fff;padding:0 3px">Aligner le personnage à l'objet</div>
<div class="t" style="left:649px;top:621px">Position</div>
<div class="t" style="left:725px;top:621px">X</div>
<div class="tf" style="left:743px;top:617px;width:46px;height:23px"></div>
<div class="t" style="left:749px;top:621px">-1</div>
<div class="spin" style="left:791px;top:618px"><div class="sb" style="top:0"><svg class="a" style="left:4px;top:2px" width="6" height="4"><path d="M0 4 L3 0 L6 4z" fill="#4a6ad0"/></svg></div><div class="sb" style="top:11px"><svg class="a" style="left:4px;top:2px" width="6" height="4"><path d="M0 0 L3 4 L6 0z" fill="#4a6ad0"/></svg></div></div>
<div class="t" style="left:817px;top:621px">Y</div>
<div class="tf" style="left:834px;top:617px;width:46px;height:23px"></div>
<div class="t" style="left:840px;top:621px">-1</div>
<div class="spin" style="left:882px;top:618px"><div class="sb" style="top:0"><svg class="a" style="left:4px;top:2px" width="6" height="4"><path d="M0 4 L3 0 L6 4z" fill="#4a6ad0"/></svg></div><div class="sb" style="top:11px"><svg class="a" style="left:4px;top:2px" width="6" height="4"><path d="M0 0 L3 4 L6 0z" fill="#4a6ad0"/></svg></div></div>
<div class="btn" style="left:909px;top:618px;width:21px;height:21px;background:linear-gradient(#fafafa 0,#eeeeee 45%,#dddddd 50%,#d6d6d6 100%)"><svg class="a" style="left:4px;top:4px" width="12" height="12"><path d="M1.5 1.5 L10.5 10.5 M10.5 1.5 L1.5 10.5" stroke="#fff" stroke-width="4" opacity="0.6"/><path d="M1.5 1.5 L10.5 10.5 M10.5 1.5 L1.5 10.5" stroke="#e00000" stroke-width="2.6"/></svg></div>
<div class="btn" style="left:947px;top:617px;width:22px;height:22px;background:linear-gradient(#f6f6f6,#dadada)"><svg class="a" style="left:4px;top:2px" width="13" height="17"><circle cx="6.5" cy="4.8" r="3.2" fill="#e4e4e4" stroke="#9a9a9a" stroke-width="1"/><path d="M2.5 8.5 Q0.5 10 0.8 13 Q1.5 16 6.5 16 Q11.5 16 12.2 13 Q12.5 10 10.5 8.5 Q6.5 10 2.5 8.5z" fill="#e0e0e0" stroke="#9a9a9a" stroke-width="1"/></svg></div>
<div class="t" style="left:649px;top:657px">Alignement</div>
<div class="a" style="left:721px;top:655px;width:92px;height:67px;background:#f0f0f0"></div>
<div class="t" style="left:722px;top:656px">-</div>
<svg class="a" style="left:721px;top:655px" width="92" height="67" viewBox="721 655 92 67">
<g fill="#8c8c8c">
<polygon points="783.5,662.5 786.7,678.5 780.3,678.5"/>
<polygon points="783.5,722.5 780.3,706.5 786.7,706.5"/>
<polygon points="753.5,692.5 769.5,689.3 769.5,695.7"/>
<polygon points="813.5,692.5 797.5,695.7 797.5,689.3"/>
<polygon points="801.2,710.2 791.8,704.0 795.0,700.8"/>
<polygon points="765.8,710.2 772.0,700.8 775.2,704.0"/>
<polygon points="765.8,674.8 775.2,681.0 772.0,684.2"/>
<polygon points="801.2,674.8 795.0,684.2 791.8,681.0"/>
</g>
<circle cx="783.5" cy="692.5" r="15.2" fill="#f0f0f0" stroke="#8c8c8c" stroke-width="1.8"/>
<path d="M783.5 677.5 V708 M768 692.5 H799" stroke="#808080" stroke-width="1" stroke-dasharray="1,1"/>
</svg>


<!-- status bar -->
<div class="a" style="left:0;top:1017px;width:1920px;height:1px;background:#969696"></div>
<div class="a" style="left:0;top:1018px;width:1920px;height:1px;background:#fff"></div>
<div class="a" style="left:200px;top:1016px;width:1720px;height:1px;background:#fff"></div>
<div class="a" style="left:0;top:1019px;width:1920px;height:20px;background:#efebea"></div>
<div class="a" style="left:0;top:1039px;width:1920px;height:1px;background:#fbfbfb"></div>
<div class="a" style="left:950px;top:1019px;width:1px;height:20px;background:#d8d8d8"></div>
<svg class="a" style="left:0;top:0;z-index:50;pointer-events:none" width="1920" height="1040">
<defs><filter id="sh" x="-30%" y="-30%" width="160%" height="160%"><feGaussianBlur in="SourceAlpha" stdDeviation="3.5"/><feOffset dx="4" dy="5" result="b"/><feComponentTransfer><feFuncA type="linear" slope="0.5"/></feComponentTransfer><feMerge><feMergeNode/><feMergeNode in="SourceGraphic"/></feMerge></filter></defs>
<polygon filter="url(#sh)" points="410,114 384.5,126.5 390,128.5 355,180 357,180.5 399.5,136.5 402.5,141.5" fill="#ff0000"/>
<polygon filter="url(#sh)" points="486,375 513.5,381.5 509,385 573,444 574,443 500.5,395 499.5,400.5" fill="#96d43e"/>
<polygon filter="url(#sh)" points="983,627 1007,612 1006,618 1115,606.5 1115,609 1008,630 1010.5,635.5" fill="#00aeef"/>
</svg>
</body></html>
